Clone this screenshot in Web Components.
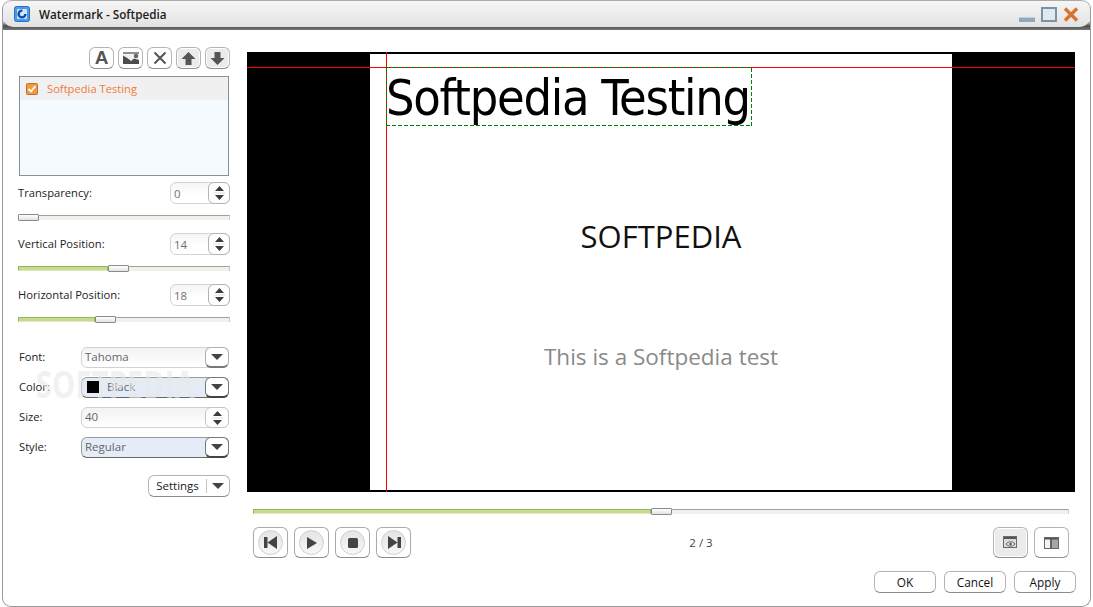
<!DOCTYPE html>
<html>
<head>
<meta charset="utf-8">
<title>Watermark - Softpedia</title>
<style>
    html, body { margin: 0; padding: 0; background: #fff; }
    body { font-family: "Open Sans", "Liberation Sans", sans-serif; font-size: 11.2px; color: #222; }
</style>
</head>
<body>
<watermark-window></watermark-window>

<script>
const ICONS = {
    image: '<svg width="16" height="12" viewBox="0 0 16 12"><rect width="16" height="3" fill="#8f8f8f"/><rect y="2" width="16" height="10" fill="#f2f2f2"/><path d="M0 3.500 5 6.500 8 9l3-2.500 5 1.500v4H0z" fill="#4d4d4d"/><circle cx="13" cy="4" r="2.200" fill="#666"/></svg>',
    remove: '<svg width="14" height="14" viewBox="0 0 14 14"><path d="M1.500 1.500l11 11M12.500 1.500l-11 11" stroke="#555" stroke-width="2" fill="none"/></svg>',
    up: '<svg width="15" height="15" viewBox="0 0 15 15"><path d="M7.500 1 14.500 8H10.500v6h-6V8H.5z" fill="#555"/></svg>',
    down: '<svg width="15" height="15" viewBox="0 0 15 15"><path d="M7.500 14 14.500 7H10.500V1h-6v6H.5z" fill="#555"/></svg>',
    first: '<svg width="14" height="13" viewBox="0 0 14 13"><path d="M0 1h3.500v11H0zM13 0v13L3.500 6.500z" fill="#444"/></svg>',
    play: '<svg width="12" height="14" viewBox="0 0 12 14"><path d="M1 1v12l10-6z" fill="#444"/></svg>',
    stop: '<svg width="10" height="10" viewBox="0 0 10 10"><rect width="10" height="10" rx="1.500" fill="#444"/></svg>',
    last: '<svg width="14" height="13" viewBox="0 0 14 13"><path d="M14 1h-3.500v11H14zM1 0v13l9.500-6.500z" fill="#444"/></svg>',
    eye: '<svg width="15" height="13" viewBox="0 0 15 13"><rect x=".5" y=".5" width="13" height="11" fill="#dcdcdc" stroke="#6a6a6a"/><rect x="1" y="1" width="12" height="2" fill="#555"/><path d="M3 8c2.500-3 6.500-3 9 0-2.500 3-6.500 3-9 0z" fill="#eee" stroke="#666"/><circle cx="7.500" cy="8" r="1.500" fill="#666"/></svg>',
    split: '<svg width="15" height="12" viewBox="0 0 15 12"><rect x=".5" y=".5" width="6" height="11" fill="#f4f4f4" stroke="#666"/><rect x="7.500" y=".5" width="7" height="11" fill="#a6a6a6" stroke="#666"/><rect x="1" y="1" width="13" height="1.500" fill="#555"/></svg>'
};

const SPIN_ARROWS = '<svg width="11" height="18" viewBox="0 0 11 18"><path d="M5.500 2 10 7H1zM1 11h9l-4.500 5z" fill="#3c3c3c"/><rect y="8.500" width="11" height="1" fill="#dcdcdc"/></svg>';
const DROP_ARROW = '<svg width="12" height="6" viewBox="0 0 12 6"><path d="M0 0h12L6 6z" fill="#444"/></svg>';

class TitleBar extends HTMLElement {
    constructor() {
        super();
        this.attachShadow({ mode: 'open' });
    }

    connectedCallback() {
        this.shadowRoot.innerHTML = `
            <style>
                :host { display: block; height: 30px; background: linear-gradient(#fff 0, #fff 20px, #4c4c4c 26px, #777 30px); border-radius: 9px 9px 0 0; }
                .bar {
                    height: 26px; display: flex; align-items: center;
                    padding-left: 11px; padding-right: 11px;
                    border-radius: 9px 9px 10px 10px;
                    border-top: 1px solid #aaa;
                    background: linear-gradient(#f6f6f6, #e2e2e2);
                }
                .logo { width: 16px; height: 16px; margin-right: 9px; }
                .name { flex: 1; font: 600 11.700px "Open Sans", "Liberation Sans", sans-serif; color: #1c1c1c; white-space: nowrap; }
                .controls { display: flex; align-items: flex-end; gap: 6px; }
            </style>
            <div class="bar">
                <svg class="logo" viewBox="0 0 16 16">
                    <rect x=".5" y=".5" width="15" height="15" rx="2" fill="#4a9ae6" stroke="#2a6fc0"/>
                    <rect x="3" y="3" width="10" height="10" rx="1" fill="#cfe4fb"/>
                    <circle cx="8" cy="8" r="3.400" fill="none" stroke="#0f4ea8" stroke-width="2.400" stroke-dasharray="16 6"/>
                </svg>
                <span class="name">Watermark - Softpedia</span>
                <span class="controls">
                    <svg width="16" height="5" viewBox="0 0 16 5"><rect width="16" height="5" fill="#92a6bc"/><rect width="16" height="1" fill="#c2cedb"/></svg>
                    <svg width="16" height="15" viewBox="0 0 16 15"><rect x="1" y="1" width="14" height="13" fill="#e2e8ef" stroke="#7d92a9" stroke-width="2"/></svg>
                    <svg width="16" height="15" viewBox="0 0 16 15"><path d="M2 1.500 14 13.500M14 1.500 2 13.500" stroke="#d9722a" stroke-width="3.400" fill="none"/></svg>
                </span>
            </div>
        `;
    }
}

class ToolButton extends HTMLElement {
    constructor() {
        super();
        this.attachShadow({ mode: 'open' });
    }

    connectedCallback() {
        const w = this.getAttribute('w') || 25;
        const h = this.getAttribute('h') || 22;
        const icon = ICONS[this.getAttribute('icon')] || '';
        this.shadowRoot.innerHTML = `
            <style>
                :host { display: block; }
                .btn {
                    box-sizing: border-box; width: ${w}px; height: ${h}px;
                    display: flex; align-items: center; justify-content: center;
                    border: 1px solid #b4b4b4; border-bottom-color: #909090; border-radius: 6px; background: #fff;
                    font: 700 19px "Liberation Sans", sans-serif; color: #555;
                }
                :host([pressed]) .btn { background: #ebebeb; box-shadow: inset 0 0 0 1px #fff; }
                svg { display: block; }
            </style>
            <div class="btn">${icon}<slot></slot></div>
        `;
    }
}

class ItemList extends HTMLElement {
    constructor() {
        super();
        this.attachShadow({ mode: 'open' });
    }

    connectedCallback() {
        this.shadowRoot.innerHTML = `
            <style>
                :host { display: block; margin-left: 1px; margin-right: 1px; height: 100px; box-sizing: border-box; border: 1px solid #87919c; background: #f5faff; }
                .row { height: 23px; display: flex; align-items: center; gap: 9px; padding-left: 6px; background: #f0f0f0; color: #f5793a; font-size: 11.200px; }
                svg { display: block; }
            </style>
            <div class="row">
                <svg width="12" height="12" viewBox="0 0 12 12">
                    <rect x=".5" y=".5" width="11" height="11" rx="1" fill="#f39a3c" stroke="#a9744a"/>
                    <path d="M2.500 6 5 8.500 9.500 3" fill="none" stroke="#fff" stroke-width="1.800"/>
                </svg>
                <slot></slot>
            </div>
        `;
    }
}

class SpinField extends HTMLElement {
    constructor() {
        super();
        this.attachShadow({ mode: 'open' });
    }

    connectedCallback() {
        this.shadowRoot.innerHTML = `
            <style>
                :host { display: flex; box-sizing: border-box; height: 22px; border: 1px solid #d4d4d4; border-radius: 6px; background: linear-gradient(#f4f4f4, #fff 60%); }
                .value { flex: 1; display: flex; align-items: center; padding-left: 3px; color: #7b6c72; font-size: 11.500px; }
                .arrows { width: 22px; margin: -1px; display: flex; align-items: center; justify-content: center; box-sizing: border-box; border: 1px solid #b4b4b4; border-radius: 6px; background: #fff; }
                svg { display: block; }
            </style>
            <div class="value"><slot></slot></div>
            <div class="arrows">${SPIN_ARROWS}</div>
        `;
    }
}

class SliderField extends HTMLElement {
    constructor() {
        super();
        this.attachShadow({ mode: 'open' });
    }

    connectedCallback() {
        const value = Number(this.getAttribute('value')) || 0;
        const fill = value > 0 ? `<div class="fill" style="width:${value}px"></div>` : '';
        this.shadowRoot.innerHTML = `
            <style>
                :host { display: flex; align-items: center; height: 5px; }
                .fill { height: 5px; box-sizing: border-box; background: #c7dd8e; border: 1px solid #97b561; border-bottom-color: #dbe8bd; }
                .thumb { width: 21px; height: 7px; flex: none; box-sizing: border-box; border: 1px solid #8b8b8b; border-radius: 1px; background: linear-gradient(#fff, #e2e2e2); }
                .rest { flex: 1; height: 5px; box-sizing: border-box; background: #f1f1ec; border-top: 1px solid #a2a2a2; border-right: 1px solid #ccc; }
            </style>
            ${fill}<div class="thumb"></div><div class="rest"></div>
        `;
    }
}

class NumberGroup extends HTMLElement {
    constructor() {
        super();
        this.attachShadow({ mode: 'open' });
    }

    connectedCallback() {
        this.shadowRoot.innerHTML = `
            <style>
                :host { display: flex; flex-direction: column; gap: 11px; }
                .top { display: flex; justify-content: space-between; align-items: center; height: 22px; }
                .top span { margin-top: -2px; }
                spin-field { width: 60px; }
            </style>
            <div class="top">
                <span>${this.getAttribute('label')}</span>
                <spin-field>${this.getAttribute('number')}</spin-field>
            </div>
            <slider-field value="${this.getAttribute('pos')}"></slider-field>
        `;
    }
}

class ComboField extends HTMLElement {
    constructor() {
        super();
        this.attachShadow({ mode: 'open' });
    }

    connectedCallback() {
        const arrow = this.hasAttribute('spin') ? SPIN_ARROWS : DROP_ARROW;
        this.shadowRoot.innerHTML = `
            <style>
                :host { display: flex; align-items: center; height: 21px; margin-right: 1px; }
                .label { width: 63px; padding-left: 1px; box-sizing: border-box; margin-top: -2px; }
                .box { flex: 1; height: 21px; display: flex; box-sizing: border-box; border: 1px solid #d2d2d2; border-radius: 6px; background: linear-gradient(#f3f3f3, #fff); }
                .text { flex: 1; display: flex; align-items: center; gap: 8px; padding-left: 3px; padding-bottom: 2px; color: #666; font-size: 11.500px; }
                .drop { width: 24px; margin: -1px; display: flex; align-items: center; justify-content: center; box-sizing: border-box; border: 1px solid #b0b0b0; border-bottom: 2px solid #777; border-radius: 6px; background: #fff; }
                :host([spin]) .drop { border-bottom: 1px solid #c4c4c4; border-color: #c4c4c4; }
                :host([active]) .box { border-color: #9a9a9a; border-bottom-color: #666; background: #e4ecf7; }
                :host([active]) .drop { border-color: #777; border-bottom-color: #444; }
                svg { display: block; }
            </style>
            <div class="label">${this.getAttribute('label')}</div>
            <div class="box">
                <div class="text"><slot></slot></div>
                <div class="drop">${arrow}</div>
            </div>
        `;
    }
}

class SplitButton extends HTMLElement {
    constructor() {
        super();
        this.attachShadow({ mode: 'open' });
    }

    connectedCallback() {
        this.shadowRoot.innerHTML = `
            <style>
                :host { display: flex; align-items: center; box-sizing: border-box; width: 82px; height: 22px; border: 1px solid #b4b4b4; border-bottom-color: #8c8c8c; border-radius: 6px; background: #fff; color: #222; }
                .text { flex: 1; text-align: center; margin-top: -1px; font-size: 11.500px; }
                .drop { width: 22px; height: 14px; display: flex; align-items: center; justify-content: center; border-left: 1px solid #c4c4c4; }
            </style>
            <div class="text"><slot></slot></div>
            <div class="drop">${DROP_ARROW}</div>
        `;
    }
}

class SidePanel extends HTMLElement {
    constructor() {
        super();
        this.attachShadow({ mode: 'open' });
    }

    connectedCallback() {
        this.shadowRoot.innerHTML = `
            <style>
                :host { display: flex; flex-direction: column; width: 212px; box-sizing: content-box; padding: 17px 17px 0 15px; }
                .tools { display: flex; justify-content: flex-end; gap: 4px; margin-bottom: 7px; }
                item-list { margin-bottom: 6px; }
                .numbers { display: flex; flex-direction: column; gap: 13px; margin-bottom: 25px; }
                .combos { display: flex; flex-direction: column; gap: 9px; margin-bottom: 17px; }
                split-button { align-self: flex-end; }
                .swatch { width: 12px; height: 12px; background: #000; margin-left: 2px; position: relative; z-index: 1; }
            </style>
            <div class="tools">
                <tool-button>A</tool-button>
                <tool-button icon="image"></tool-button>
                <tool-button icon="remove"></tool-button>
                <tool-button icon="up" pressed></tool-button>
                <tool-button icon="down" pressed></tool-button>
            </div>
            <item-list>Softpedia Testing</item-list>
            <div class="numbers">
                <number-group label="Transparency:" number="0" pos="0"></number-group>
                <number-group label="Vertical Position:" number="14" pos="90"></number-group>
                <number-group label="Horizontal Position:" number="18" pos="77"></number-group>
            </div>
            <div class="combos">
                <combo-field label="Font:">Tahoma</combo-field>
                <combo-field label="Color:" active><span class="swatch"></span><span>Black</span></combo-field>
                <combo-field label="Size:" spin>40</combo-field>
                <combo-field label="Style:" active>Regular</combo-field>
            </div>
            <split-button>Settings</split-button>
        `;
    }
}

class SlidePreview extends HTMLElement {
    constructor() {
        super();
        this.attachShadow({ mode: 'open' });
    }

    connectedCallback() {
        this.shadowRoot.innerHTML = `
            <style>
                :host { display: flex; justify-content: center; position: relative; height: 440px; background: #000; }
                .slide {
                    width: 582px; margin: 2px 0; background: #fff;
                    display: flex; flex-direction: column; align-items: center;
                    padding: 163px 0 0 0; box-sizing: border-box;
                }
                .heading { font: 31px/38px "Open Sans", "Liberation Sans", sans-serif; color: #111; }
                .sub { font: 22.500px/30px "Open Sans", "Liberation Sans", sans-serif; color: #8a8a8a; margin-top: 87px; }
                .guide-h { position: absolute; left: 0; right: 0; top: 15px; height: 1px; background: #f00; }
                .guide-v { position: absolute; left: 139px; top: 0; bottom: 0; width: 1px; background: #f00; }
                .mark {
                    position: absolute; left: 139px; top: 15px; width: 366px; height: 59px; box-sizing: border-box;
                    color: #000; white-space: nowrap;
                    font: 50px/62px "DejaVu Sans", sans-serif; font-stretch: condensed; letter-spacing: -1.250px;
                    background:
                        repeating-linear-gradient(90deg, #008000 0 4px, transparent 4px 6px) left top / 100% 1px no-repeat,
                        repeating-linear-gradient(90deg, #008000 0 4px, transparent 4px 6px) left bottom / 100% 1px no-repeat,
                        repeating-linear-gradient(0deg, #008000 0 4px, transparent 4px 6px) left top / 1px 100% no-repeat,
                        repeating-linear-gradient(0deg, #008000 0 4px, transparent 4px 6px) right top / 1px 100% no-repeat;
                }
            </style>
            <div class="slide">
                <div class="heading">SOFTPEDIA</div>
                <div class="sub">This is a Softpedia test</div>
            </div>
            <div class="guide-h"></div>
            <div class="guide-v"></div>
            <div class="mark">Softpedia Testing</div>
        `;
    }
}

class TransportButton extends HTMLElement {
    constructor() {
        super();
        this.attachShadow({ mode: 'open' });
    }

    connectedCallback() {
        this.shadowRoot.innerHTML = `
            <style>
                :host { display: flex; align-items: center; justify-content: center; box-sizing: border-box; width: 35px; height: 31px; border: 1px solid #aaa; border-bottom-color: #8c8c8c; border-radius: 6px; background: #fff; }
                .disc { width: 25px; height: 25px; box-sizing: border-box; border-radius: 50%; border: 1px solid #cfcfcf; background: linear-gradient(#e4e4e4, #f7f7f7); display: flex; align-items: center; justify-content: center; }
                svg { display: block; }
            </style>
            <div class="disc">${ICONS[this.getAttribute('icon')]}</div>
        `;
    }
}

class DialogButton extends HTMLElement {
    constructor() {
        super();
        this.attachShadow({ mode: 'open' });
    }

    connectedCallback() {
        this.shadowRoot.innerHTML = `
            <style>
                :host { display: flex; align-items: center; justify-content: center; box-sizing: border-box; width: 62px; height: 22px; border: 1px solid #b4b4b4; border-bottom-color: #8c8c8c; border-radius: 6px; background: #fff; color: #111; font-size: 11.800px; }
                span { margin-top: -1px; }
            </style>
            <span><slot></slot></span>
        `;
    }
}

class PlayerPanel extends HTMLElement {
    constructor() {
        super();
        this.attachShadow({ mode: 'open' });
    }

    connectedCallback() {
        this.shadowRoot.innerHTML = `
            <style>
                :host { display: flex; flex-direction: column; flex: 1; padding: 22px 15px 0 0; min-width: 0; }
                slider-field { margin: 17px 6px 0; }
                .transport { display: flex; align-items: center; margin: 13px 6px 0; height: 31px; }
                .group { display: flex; gap: 6px; }
                .page { flex: 1; text-align: center; color: #444; font-size: 11.500px; padding-right: 2px; }
                .actions { display: flex; justify-content: flex-end; gap: 8px; margin: 13px -1px 0 0; }
            </style>
            <slide-preview></slide-preview>
            <slider-field value="398"></slider-field>
            <div class="transport">
                <div class="group">
                    <transport-button icon="first"></transport-button>
                    <transport-button icon="play"></transport-button>
                    <transport-button icon="stop"></transport-button>
                    <transport-button icon="last"></transport-button>
                </div>
                <div class="page">2 / 3</div>
                <div class="group">
                    <tool-button icon="eye" w="35" h="31" pressed></tool-button>
                    <tool-button icon="split" w="35" h="31"></tool-button>
                </div>
            </div>
            <div class="actions">
                <dialog-button>OK</dialog-button>
                <dialog-button>Cancel</dialog-button>
                <dialog-button>Apply</dialog-button>
            </div>
        `;
    }
}

class WatermarkWindow extends HTMLElement {
    constructor() {
        super();
        this.attachShadow({ mode: 'open' });
    }

    connectedCallback() {
        this.shadowRoot.innerHTML = `
            <style>
                :host { display: block; width: 1093px; height: 607px; box-sizing: border-box; padding: 0 2px 0 2px; position: relative; overflow: hidden; }
                .frame { height: 607px; box-sizing: border-box; border: 1px solid #9a9a9a; border-top: 0; border-radius: 9px; background: #fff; }
                .body { display: flex; }
                .stamp {
                    position: absolute; left: 36px; top: 358px;
                    font: 700 38px/50px "Open Sans", "Liberation Sans", sans-serif;
                    transform: scaleX(.77); transform-origin: left top;
                    color: rgba(232,232,232,.62); white-space: nowrap;
                }
                .stamp sup { font-size: 9px; font-weight: 400; vertical-align: top; }
            </style>
            <div class="frame">
                <title-bar></title-bar>
                <div class="body">
                    <side-panel></side-panel>
                    <player-panel></player-panel>
                </div>
            </div>
            <div class="stamp">SOFTPEDIA<sup>®</sup></div>
        `;
    }
}

customElements.define('title-bar', TitleBar);
customElements.define('tool-button', ToolButton);
customElements.define('item-list', ItemList);
customElements.define('spin-field', SpinField);
customElements.define('slider-field', SliderField);
customElements.define('number-group', NumberGroup);
customElements.define('combo-field', ComboField);
customElements.define('split-button', SplitButton);
customElements.define('side-panel', SidePanel);
customElements.define('slide-preview', SlidePreview);
customElements.define('transport-button', TransportButton);
customElements.define('dialog-button', DialogButton);
customElements.define('player-panel', PlayerPanel);
customElements.define('watermark-window', WatermarkWindow);
</script>
</body>
</html>
